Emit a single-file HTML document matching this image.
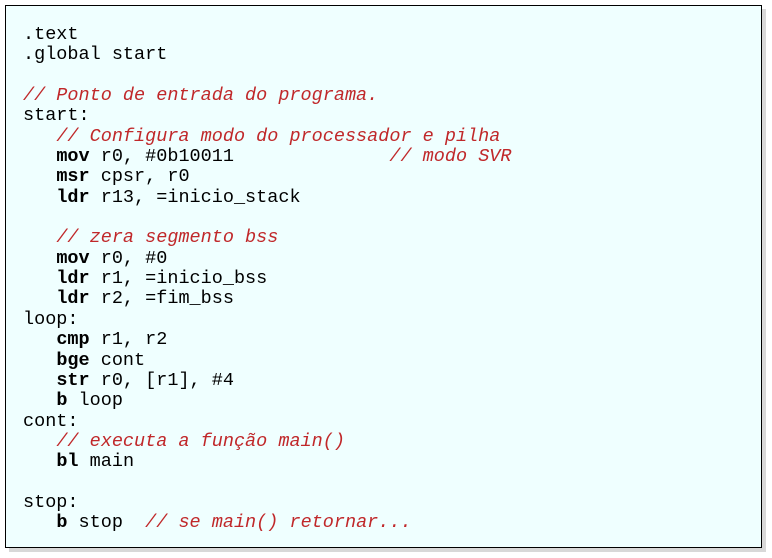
<!DOCTYPE html>
<html><head><style>
html,body{margin:0;padding:0;background:#fff;width:772px;height:558px;overflow:hidden}
.box{position:absolute;left:5px;top:5px;width:755px;height:541px;border:1px solid #000;background:#efffff;box-shadow:4px 4px 0 #d8d8d8}
pre{position:absolute;left:17px;top:19px;margin:0;font-family:"Liberation Mono",monospace;font-size:18.5px;line-height:20.35px;color:#000}
i{color:#c0282a;font-style:italic}
b{font-weight:bold}
</style></head><body>
<div class="box"><pre>.text
.global start

<i>// Ponto de entrada do programa.</i>
start:
   <i>// Configura modo do processador e pilha</i>
   <b>mov</b> r0, #0b10011              <i>// modo SVR</i>
   <b>msr</b> cpsr, r0
   <b>ldr</b> r13, =inicio_stack

   <i>// zera segmento bss</i>
   <b>mov</b> r0, #0
   <b>ldr</b> r1, =inicio_bss
   <b>ldr</b> r2, =fim_bss
loop:
   <b>cmp</b> r1, r2
   <b>bge</b> cont
   <b>str</b> r0, [r1], #4
   <b>b</b> loop
cont:
   <i>// executa a função main()</i>
   <b>bl</b> main

stop:
   <b>b</b> stop  <i>// se main() retornar...</i></pre></div>
</body></html>
